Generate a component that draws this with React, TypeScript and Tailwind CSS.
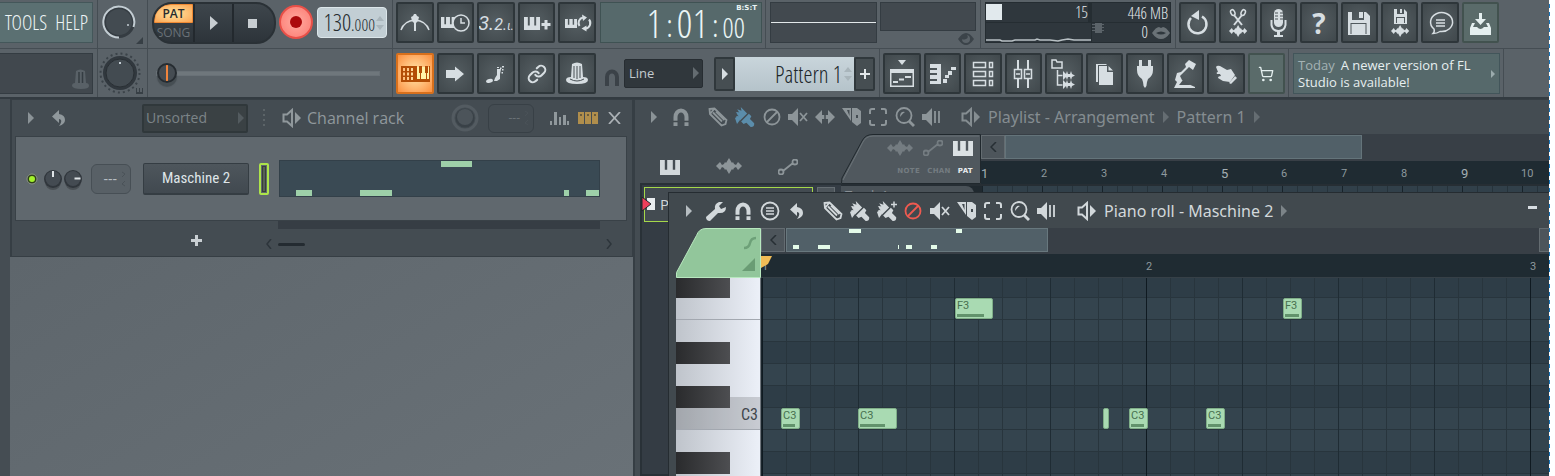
import type { ReactNode } from 'react';
import { Link, ShoppingCart } from 'lucide-react';

const NARROW = "font-light font-['Open_Sans_Condensed_Light','Noto_Sans_Condensed_Light','Open_Sans_Condensed','Roboto_Condensed',sans-serif]";

function Svg({ w = 32, h = 32, children, className = '' }: { w?: number; h?: number; children: ReactNode; className?: string }) {
  return (
    <svg width={w} height={h} viewBox={`0 0 ${w} ${h}`} fill="currentColor" className={`shrink-0 ${className}`} aria-hidden="true">
      {children}
    </svg>
  );
}

const Wave = ({ t }: { t?: string }) => (
  <path
    transform={t}
    d="M0 8l4-4 2 3 2-1 1-2 1 1 3-5 3 5 1-1 1 2 2 1 2-3 4 4-4 4-2-3-2 1-1 2-1-1-3 5-3-5-1 1-1-2-2-1-2 3z"
  />
);

const Keys = ({ x, y, w, h }: { x: number; y: number; w: number; h: number }) => (
  <path
    d={`M${x} ${y}h${w * 0.24}v${h * 0.65}h${w * 0.12}V${y}h${w * 0.28}v${h * 0.65}h${w * 0.12}V${y}h${w * 0.24}v${h}h${-w}z`}
  />
);

const topIcons: { label: string; icon: ReactNode }[] = [
  {
    label: 'Metronome',
    icon: (
      <Svg>
        <path d="M2 23q3-9 14-10q11 1 14 10" fill="none" stroke="currentColor" strokeWidth="1.500" />
        <path d="M15 7h2l1 2 2 1-1 4-2 2v8h-2v-8l-2-2-1-4 2-1z" />
      </Svg>
    ),
  },
  {
    label: 'Wait for input',
    icon: (
      <Svg>
        <Keys x={2} y={10} w={14} h={11} />
        <circle cx="22" cy="16" r="8" fill="#4b5357" stroke="currentColor" strokeWidth="1.500" />
        <path d="M22 11v5h4" fill="none" stroke="currentColor" strokeWidth="1.500" />
      </Svg>
    ),
  },
  {
    label: 'Countdown',
    icon: (
      <span className="flex items-baseline font-['Roboto',sans-serif] italic">
        <span className="text-xl">3.</span>
        <span className="text-base">2.</span>
        <span className="text-xs">ι.</span>
      </span>
    ),
  },
  {
    label: 'Overdub',
    icon: (
      <Svg>
        <Keys x={3} y={10} w={16} h={13} />
        <path d="M23.500 13h3v3h3v3h-3v3.500h-3V19h-3v-3h3z" />
      </Svg>
    ),
  },
  {
    label: 'Loop record',
    icon: (
      <Svg>
        <Keys x={4} y={12} w={12} h={9} />
        <path d="M18.500 19a5.500 5.500 0 0 1 3.500-8.500M28 12.500a5.500 5.500 0 0 1-3.500 9" fill="none" stroke="currentColor" strokeWidth="2" />
        <path d="M21 7.500l5 3-4 3.500zM25.500 18.500l-5 3 5 3z" />
      </Svg>
    ),
  },
];

const panelIcons: { label: string; icon: ReactNode }[] = [
  {
    label: 'Typing keyboard',
    icon: (
      <Svg>
        <path d="M17 9h13v14H17z" fill="#fff3a8" />
        <path fillRule="evenodd" d="M2 8h14v16H2zM4 10v3h2v-3zM8 10v3h2v-3zM12 10v3h2v-3zM4 14.500v3h2v-3zM8 14.500v3h2v-3zM12 14.500v3h2v-3zM4 19v3h2v-3zM8 19v3h2v-3zM12 19v3h2v-3z" />
        <path d="M16 8h2v16h-2zM20 8h3v7h-1v6h-1v-6h-1zM26 8h3v7h-1v6h-1v-6h-1zM30 8h1v13h-1zM16 21h15v3H16z" />
      </Svg>
    ),
  },
  { label: 'Auto scroll', icon: <Svg><path d="M7 12h9V8.500l9 7.500-9 7.500V20H7z" /></Svg> },
  {
    label: 'Step edit',
    icon: (
      <Svg>
        <path d="M17 11h4l-1 5v5l-3 2h-3l1-3 2-3z" />
        <ellipse cx="9.500" cy="23" rx="3.500" ry="2" transform="rotate(-15 9 23)" />
        <path d="M17 9h2v1h-2zM20 9.500h1.500V11H20zM22 8h2v1.500h-2zM22 11h1.500v1.500H22zM21.500 14H23v1.500h-1.500z" />
      </Svg>
    ),
  },
  { label: 'Link controller', icon: <Link className="size-5" strokeWidth={2.5} /> },
  {
    label: 'Multilink',
    icon: (
      <Svg>
        <path d="M5 22q0-3 5-3l1-13q5-3 10 0l1 13q5 0 5 3 0 4-11 4T5 22z" />
        <path d="M13 8v12M16 8v13M19 8v12M9 21q7 4 14 0" fill="none" stroke="#495155" />
      </Svg>
    ),
  },
];

const fileIcons: { label: string; icon: ReactNode; lit?: boolean }[] = [
  {
    label: 'Undo',
    icon: (
      <Svg>
        <path d="M9 11a9 9 0 1 0 11-1.500" fill="none" stroke="currentColor" strokeWidth="2.500" />
        <path d="M17 3v10l-8-4z" />
      </Svg>
    ),
  },
  {
    label: 'Edit audio',
    icon: (
      <Svg>
        <path d="M12 8l8 10M20 8l-8 10" stroke="currentColor" strokeWidth="2" />
        <g fill="none" stroke="currentColor" strokeWidth="1.500">
          <ellipse cx="11" cy="5.500" rx="2" ry="3" transform="rotate(-25 11 6)" />
          <ellipse cx="21" cy="5.500" rx="2" ry="3" transform="rotate(25 21 6)" />
        </g>
        <Wave t="translate(7 18) scale(.7 .75)" />
      </Svg>
    ),
  },
  {
    label: 'Record audio',
    icon: (
      <Svg>
        <rect x="12" y="2" width="9" height="18" rx="4.500" />
        <path d="M13 6h3M18 6h3M13 9h3M18 9h3M13 12h3M18 12h3" stroke="#4b5357" />
        <path d="M9.500 13v5q1 6 7 6t7-6v-5" fill="none" stroke="currentColor" strokeWidth="2" />
        <path d="M15 24h3v4h3v2h-9v-2h3z" />
      </Svg>
    ),
  },
  {
    label: 'Help',
    icon: <span className="font-['Open_Sans',sans-serif] text-[28px] font-bold">?</span>,
  },
  {
    label: 'Save',
    icon: (
      <Svg>
        <path fillRule="evenodd" d="M5 5h4v8h12V5h2l4 4v19H5zM7.500 16v11h16V16z" />
        <path d="M8.500 17h14v10h-14zM16 5h4v6h-4z" />
      </Svg>
    ),
  },
  {
    label: 'Render',
    icon: (
      <Svg>
        <path fillRule="evenodd" d="M10 2h3v5h7V2l3 3v12H10zM12 10v6h9v-6z" />
        <path d="M13 11h7v5h-7zM16 2h2v4h-2z" />
        <Wave t="translate(7 18) scale(.7 .75)" />
      </Svg>
    ),
  },
  {
    label: 'Project info',
    icon: (
      <Svg>
        <path d="M10 22a11 9.500 0 1 1 6 2.500q-3 2-7 2 2-2 1-4.500z" fill="none" stroke="currentColor" strokeWidth="1.500" />
        <path d="M12 13h9M12 16h9M12 19h9" stroke="currentColor" strokeWidth="1.500" />
      </Svg>
    ),
  },
  {
    label: 'Install update',
    lit: true,
    icon: (
      <Svg>
        <path d="M15 6h3v6h4l-5.500 6L11 12h4z" />
        <path d="M8 16h3l-2 4h4q3.500 4 7 0h4l-2-4h3l2 5v7H6v-7z" />
      </Svg>
    ),
  },
];

const windowIcons: { label: string; icon: ReactNode; lit?: boolean }[] = [
  {
    label: 'Playlist',
    icon: (
      <Svg>
        <path d="M12 2h8l-4 5z" />
        <path fillRule="evenodd" d="M4 11h24v18H4zM5.500 15v12.500h21V15z" />
        <path d="M7 23h5v2H7zM13 20.500h5v2h-5zM19 18h6v2h-6z" />
      </Svg>
    ),
  },
  {
    label: 'Piano roll',
    icon: (
      <Svg>
        <path d="M4 6h11v20H4v-3h7v-2H4v-4h7v-2H4v-3h7v-2H4z" />
        <path d="M17 21h4v4h-4zM19 17h4v3h-4zM22 13h4v4h-4zM25 9h5v3h-5z" />
      </Svg>
    ),
  },
  {
    label: 'Channel rack',
    icon: (
      <Svg>
        <g fill="none" stroke="currentColor" strokeWidth="1.500">
          <path d="M6.500 4.500h12v5h-12zM22.500 4.500h3v5h-3zM6.500 13.500h12v5h-12zM22.500 13.500h3v5h-3zM6.500 22.500h12v5h-12zM22.500 22.500h3v5h-3z" />
        </g>
      </Svg>
    ),
  },
  {
    label: 'Mixer',
    icon: (
      <Svg>
        <path d="M11 2v9M11 21v9M21 2v9M21 21v9" stroke="currentColor" strokeWidth="2" />
        <path d="M7.500 11.500h7v9h-7zM17.500 11.500h7v9h-7zM9 16h4M19 16h4" fill="none" stroke="currentColor" strokeWidth="1.500" />
      </Svg>
    ),
  },
  {
    label: 'Browser',
    icon: (
      <Svg>
        <path d="M4 2h4l1 2h5v6H4zM9.500 12v15h5M9.500 17.500h5" fill="none" stroke="currentColor" strokeWidth="1.500" />
        <path d="M15 13l3 3 1-3 1 3h2l1-3 1 3 3 1.500-3 1.500-1 3-1-3h-2l-1 3-1-3-3 3zM15 22l3 3 1-3 1 3h2l1-3 1 3 3 1.500-3 1.500-1 3-1-3h-2l-1 3-1-3-3 3z" />
      </Svg>
    ),
  },
  {
    label: 'Copy',
    icon: (
      <Svg>
        <path d="M8 6h10l1 1H10v17H8z" />
        <path d="M11 8h8v6h6v13H11zM20.500 8l4.500 4.500h-4.500z" />
      </Svg>
    ),
  },
  {
    label: 'Plugins',
    icon: <Svg><path d="M10 2h3v6h-3zM19 2h3v6h-3zM8 8h16v4q0 6-5 9l-1 3q0 4-2 6-2-2-2-6l-1-3q-5-3-5-9z" /></Svg>,
  },
  {
    label: 'Touch controllers',
    icon: (
      <Svg>
        <path d="M16 6l4-4 7 4-3 6-4-3-7 7-2 2 2 4 4 3 9 4v1H5l3-6-2-2 2-7 4-1 5-5z" />
        <path d="M14 22l-4 5h12z" fill="#4b5357" />
      </Svg>
    ),
  },
  {
    label: 'Pointer',
    icon: (
      <Svg>
        <path d="M6 9q1-2 4-1l7 4 4-1 4 6-5 7-7-1-5-3q0-2 3-2l-1-2-3 0q-1-2 1-2z" />
        <path d="M25 18l2 2-6 6-2-1z" />
      </Svg>
    ),
  },
  { label: 'Shop', lit: true, icon: <ShoppingCart className="size-4" strokeWidth={2} /> },
];

function ToolButton({ label, icon, lit, on }: { label: string; icon: ReactNode; lit?: boolean; on?: boolean }) {
  const look = on
    ? 'border-[#d8701c] bg-radial from-[#ffe9ae] to-[#fb8f3c] text-[#b34d06]'
    : lit
      ? 'border-[#42524f] bg-[#5a6b6a] text-[#e4efef]'
      : 'border-[#2e363a] bg-radial from-[#555e62] to-[#40484c] text-[#d7dee2]';
  return (
    <button aria-label={label} className={`flex h-[41px] min-w-0 flex-1 items-center justify-center overflow-hidden rounded-xs border-2 ${look}`}>
      {icon}
    </button>
  );
}

const Tri = ({ className = 'text-[#9aa1a5]' }: { className?: string }) => (
  <Svg w={6} h={12} className={className}><path d="M0 0l6 6-6 6z" /></Svg>
);

const SpeakerLogo = () => (
  <Svg w={19} h={20}>
    <path d="M1.500 6.500H5L10 2v16l-5-4.500H1.500z" fill="none" stroke="currentColor" strokeWidth="2" />
    <path d="M13 4l6 6-6 6z" />
  </Svg>
);

const Magnet = () => (
  <Svg w={18} h={20}>
    <path d="M3.500 19v-9a5.500 6.500 0 0 1 11 0v9" fill="none" stroke="currentColor" strokeWidth="4" />
    <path d="M1 14.500h5M12 14.500h5" stroke="#41494e" strokeWidth="1.500" />
  </Svg>
);

const Undo = () => (
  <Svg w={14} h={16}><path d="M7 0v4q6 1 6 6 0 4-6 6 3-4 2-6-1-1-2-1v4L0 6.500z" /></Svg>
);

const Keyboard = () => <Svg w={20} h={15}><Keys x={0} y={0} w={20} h={15} /></Svg>;
const WaveIcon = () => <Svg w={26} h={18}><Wave t="translate(0 1)" /></Svg>;
const Automation = () => (
  <Svg w={20} h={16}>
    <path d="M5 12L15 4M5.500 13a2.500 2.500 0 1 1-5 0 2.500 2.500 0 0 1 5 0zM19.500 3a2.500 2.500 0 1 1-5 0 2.500 2.500 0 0 1 5 0z" fill="none" stroke="currentColor" strokeWidth="1.800" />
  </Svg>
);

const Brush = ({ plus }: { plus?: boolean }) => (
  <Svg w={20} h={20}>
    <path transform="rotate(-45 10 10)" d="M4 9V3l2 2 1-5 2 3 1-4 2 4 2-3v9zM4 10.500h11V14l-3 1v6q-2.500 3-5 0v-6l-3-1z" />
    <path d="M0 11l3-2 2 4-3 4zM2 5l3 1-2 3z" />
    {plus && <path d="M14 3.500h6M17 .5v6" stroke="currentColor" strokeWidth="1.500" />}
  </Svg>
);

const drawTools = {
  pencil: (
    <Svg w={20} h={20}>
      <path d="M1.500 2l5-.5 12 11.500-1 4-4 1.500L2 7zM2 7l4.500-5.500M5 5.500l9 9M8 4.500l8.500 8.500" fill="none" stroke="currentColor" strokeWidth="1.800" />
    </Svg>
  ),
  brush: <Brush />,
  brushPlus: <Brush plus />,
  remove: (
    <Svg w={20} h={20}>
      <circle cx="10" cy="10" r="7.500" fill="none" stroke="currentColor" strokeWidth="1.800" />
      <path d="M5 15L15 5" stroke="currentColor" strokeWidth="1.800" />
    </Svg>
  ),
  mute: (
    <Svg w={20} h={20}>
      <path d="M0 7h4l6-6v18l-6-6H0z" />
      <path d="M12 6l7 8M19 6l-7 8" stroke="currentColor" strokeWidth="1.800" />
    </Svg>
  ),
  slip: <Svg w={20} h={20}><path d="M0 10l7-7v5h6V3l7 7-7 7v-5H7v5z" /><path d="M10 5v10" stroke="#444c52" strokeWidth="1.500" /></Svg>,
  slice: (
    <Svg w={20} h={20}>
      <path fillRule="evenodd" d="M10 1h5l4 3v12l-4 3-5-4zM14 8v3h2V8z" />
      <path fillRule="evenodd" d="M0 1h9v13zM5 3l2.500 6V3z" />
    </Svg>
  ),
  select: (
    <Svg w={20} h={20}>
      <path d="M2 7V4q0-2 2-2h3M13 2h3q2 0 2 2v3M18 13v3q0 2-2 2h-3M7 18H4q-2 0-2-2v-3" fill="none" stroke="currentColor" strokeWidth="2" />
    </Svg>
  ),
  zoom: (
    <Svg w={20} h={20}>
      <circle cx="9" cy="8.500" r="7.500" fill="none" stroke="currentColor" strokeWidth="1.800" />
      <path d="M5 10q0-6 5-5-2 1-5 5zM13 15l2-2 5 5-2 2z" />
    </Svg>
  ),
  playback: (
    <Svg w={20} h={20}>
      <path d="M0 7h4l6-6v18l-6-6H0z" />
      <path d="M13 4v12M17 4v12" stroke="currentColor" strokeWidth="1.800" />
    </Svg>
  ),
};

const playlistTools: [string, ReactNode, string?][] = [
  ['Draw', drawTools.pencil],
  ['Paint', drawTools.brush, 'text-[#5b8dab]'],
  ['Delete', drawTools.remove],
  ['Mute', drawTools.mute],
  ['Slip', drawTools.slip],
  ['Slice', drawTools.slice],
  ['Select', drawTools.select],
  ['Zoom', drawTools.zoom],
  ['Playback', drawTools.playback],
];

const pianoTools: [string, ReactNode, string?][] = [
  ['Draw', drawTools.pencil],
  ['Paint', drawTools.brush],
  ['Paint sequence', drawTools.brushPlus],
  ['Delete', drawTools.remove, 'text-[#ee5a50]'],
  ['Mute', drawTools.mute],
  ['Slice', drawTools.slice],
  ['Select', drawTools.select],
  ['Zoom', drawTools.zoom],
  ['Playback', drawTools.playback],
];

function Tools({ items }: { items: [string, ReactNode, string?][] }) {
  return (
    <div className="grid w-60 shrink-0 grid-cols-9">
      {items.map(([label, icon, color]) => (
        <button key={label} aria-label={label} className={`flex justify-center ${color ?? ''}`}>
          {icon}
        </button>
      ))}
    </div>
  );
}

function SmallKnob({ angle }: { angle: number }) {
  return (
    <Svg w={20} h={24}>
      <circle cx="10" cy="13" r="8" fill="#4a5055" />
      <circle cx="10" cy="10" r="9" fill="#30363c" />
      <circle cx="10" cy="9.500" r="7.500" fill="#444b52" />
      <path d="M10 2v6" stroke="#dfe4e7" strokeWidth="2" transform={`rotate(${angle} 10 9.500)`} />
    </Svg>
  );
}

function SpinArrows() {
  return (
    <Svg w={8} h={16} className="text-[#a9b5bb]"><path d="M0 6l4-5 4 5zM0 10h8l-4 5z" /></Svg>
  );
}

function Toolbar() {
  return (
    <header className="border-b-2 border-[#333b41] bg-[#5a6268]">
      <div className="flex h-[49px] border-b border-[#454d53]">
        <div className="w-[98px] shrink-0 border-r border-[#454d53] pt-0.5">
          <nav className={`flex h-[41px] w-[93px] items-center justify-end gap-2 overflow-hidden border border-l-0 border-[#44575a] bg-[#5b7072] pr-1 text-xl text-[#eef5f6] ${NARROW}`}>
            <a href="#options">S</a>
            <a href="#tools">TOOLS</a>
            <a href="#help">HELP</a>
          </nav>
        </div>
        <div className="relative flex w-[50px] shrink-0 justify-center border-r border-[#454d53] pt-[5px] pr-[5px]">
          <Svg w={36} h={36}>
            <circle cx="17" cy="17" r="16" fill="#353c42" />
            <circle cx="17" cy="17" r="13" fill="#434b51" />
            <path d="M17 32.500A15.500 15.500 0 1 1 31.500 22" fill="none" stroke="#c3cdd3" strokeWidth="2" />
            <circle cx="26" cy="20" r="1" fill="#c3cdd3" />
          </Svg>
          <Svg w={7} h={7} className="absolute right-1 bottom-1 text-[#373f45]"><path d="M7 0v7H0z" /></Svg>
        </div>
        <div className="flex w-[245px] shrink-0 border-r border-[#454d53] pt-0.5 pl-1">
          <div className="flex h-[42px] w-[124px] overflow-hidden rounded-[20px] border-2 border-[#2a3136] bg-linear-to-b from-[#3e464c] to-[#2d343a]">
            <div className="flex w-[41px] flex-col border-r-2 border-[#23292e] text-center font-['Open_Sans',sans-serif] text-xs">
              <button className="h-[19px] rounded-tl-2xl border border-[#f08a34] bg-radial from-[#ffe6a0] to-[#fba552] leading-4 font-semibold text-[#272b2e]">PAT</button>
              <button className="h-[19px] leading-5 text-[#697177]">SONG</button>
            </div>
            <button aria-label="Play" className="flex w-[39px] items-center justify-center border-r-2 border-[#23292e] text-[#c8ced2]">
              <Svg w={8} h={14}><path d="M0 0l8 7-8 7z" /></Svg>
            </button>
            <button aria-label="Stop" className="flex flex-1 items-center justify-center pr-1"><span className="size-[9px] bg-[#c8ced2]" /></button>
          </div>
          <button aria-label="Record" className="mt-[3px] ml-[3px] flex size-[34px] items-center justify-center rounded-full border-2 border-[#e85048] bg-radial from-[#ffaaa0] to-[#fb7a72]">
            <span className="size-3 rounded-full bg-[#ab0a0c]" />
          </button>
          <div className={`mt-[5px] ml-1 flex h-[31px] w-[70px] items-center justify-end gap-px rounded border border-[#dce6ea] bg-[#c2ced4] pr-0.5 text-[#262c30] ${NARROW}`}>
            <span className="text-[23px] leading-none">130<span className="text-[17px]">.000</span></span>
            <SpinArrows />
          </div>
        </div>
        <div className="flex w-[373px] shrink-0 gap-1 border-r border-[#454d53] pt-0.5 pl-[3px]">
          <div className="flex w-50 gap-[3px]">
            {topIcons.map((b) => <ToolButton key={b.label} {...b} />)}
          </div>
          <div className={`relative mr-[3px] flex h-[41px] flex-1 items-center justify-end gap-1 border border-[#3f5253] bg-[#56696b] pr-4 text-[#eaf5f5] ${NARROW}`}>
            <span className="text-[39px] leading-none">1</span>
            <span className="pt-1 text-[32px] leading-none">:</span>
            <span className="text-[39px] leading-none">01</span>
            <span className="pt-1 text-[32px] leading-none">:</span>
            <span className="pt-2 text-[28px] leading-none">00</span>
            <span className="absolute top-0 right-1 font-['DejaVu_Sans',sans-serif] text-[7px] font-bold">B:S:T</span>
          </div>
        </div>
        <div className="flex w-[215px] shrink-0 gap-[3px] border-r border-[#454d53] pt-0.5 pl-1">
          <div className="flex h-[41px] w-[107px] items-center border border-[#343c42] bg-[#42494f]"><div className="h-px w-full bg-[#e3e8ea]" /></div>
          <div className="flex w-24 flex-col items-end">
            <div className="h-[29px] w-full border border-[#343c42] bg-[#42494f]" />
            <Svg w={16} h={14} className="mt-px mr-0.5 text-[#3b4349]">
              <path fillRule="evenodd" d="M0 7q8-12 16 0-8 12-16 0zM4 7a4 4 0 0 0 8 0 4 4 0 0 0-3-4q2 3-1 4t-4 0z" />
            </Svg>
          </div>
        </div>
        <div className="w-[195px] shrink-0 border-r border-[#454d53] pt-0.5 pl-1">
          <div className={`grid h-[41px] w-[186px] grid-cols-[106px_1fr] grid-rows-2 border border-[#252d32] bg-[#2f373d] text-base leading-5 text-[#e6ebee] ${NARROW}`}>
            <div className="flex items-center justify-between border-r-4 border-b border-[#252d32]"><span className="size-4 bg-[#e1e9ed]" />15</div>
            <div className="border-b border-[#252d32] pr-0.5 text-right">446 MB</div>
            <div className="flex items-end border-r border-[#252d32]">
              <Svg w={105} h={4}><path d="M0 2h14l2 1h10l3-1h20l2-1 3 1h10l8 1 4-1 6-1 6 1h17" fill="none" stroke="#b8c0c4" strokeWidth="1.500" /></Svg>
            </div>
            <div className="flex items-center justify-end gap-1">
              <Svg w={12} h={12} className="mr-auto mb-2 text-[#5b6369]"><path d="M3 1h7v10H3zM0 2h12v1H0zM0 5h12v1H0zM0 8h12v1H0z" /></Svg>
              0
              <Svg w={18} h={13} className="text-[#6a7277]"><path fillRule="evenodd" d="M0 7q4-6 7-6l2 1 2-1q3 0 7 6-4 6-9 6T0 7zM4 7q5 3 10 0-5-3-10 0z" /></Svg>
            </div>
          </div>
        </div>
        <div className="flex w-[323px] shrink-0 gap-[3px] pt-0.5 pl-[3px]">
          {fileIcons.map((b) => <ToolButton key={b.label} {...b} />)}
        </div>
      </div>

      <div className="flex h-12">
        <div className="w-[98px] shrink-0 border-r border-[#454d53] pt-1">
          <div className="flex h-[41px] w-[93px] items-end justify-end border border-l-0 border-[#343c42] bg-[#41484e] pr-[3px] pb-1">
            <Svg w={17} h={20} className="text-[#596167]">
              <path d="M0 17q0-3 3-3L4 2q4-3 9 0l1 12q3 0 3 3 0 3-8 3t-9-3z" />
              <path d="M7 3v11M10.500 3v11" stroke="#343c42" strokeWidth="1.500" />
            </Svg>
          </div>
        </div>
        <div className="relative flex w-[50px] shrink-0 justify-center border-r border-[#454d53] pt-[3px] pr-[5px]">
          <Svg w={42} h={42}>
            <circle cx="21" cy="21" r="19.500" fill="none" stroke="#3b4349" strokeWidth="2" strokeDasharray="2 3.100" />
            <circle cx="21" cy="21" r="17" fill="#31383e" />
            <circle cx="21" cy="21" r="14" fill="#434b51" stroke="#292f34" />
            <path d="M20 10h2v2h-2z" fill="#c3cdd3" />
          </Svg>
          <Svg w={7} h={6} className="absolute right-1 bottom-[3px] text-[#373f45]"><path d="M0 0h1v4h2V0h1v4h2V0h1v6H0z" /></Svg>
        </div>
        <div className="flex w-[245px] shrink-0 items-center border-r border-[#454d53] pl-2">
          <input
            type="range"
            aria-label="Master pitch"
            min={0}
            max={100}
            defaultValue={0}
            className="h-[5px] w-[224px] appearance-none border border-[#697177] bg-[#6f777c] [&::-webkit-slider-thumb]:size-5 [&::-webkit-slider-thumb]:appearance-none [&::-webkit-slider-thumb]:rounded-full [&::-webkit-slider-thumb]:border-2 [&::-webkit-slider-thumb]:border-[#262c31] [&::-webkit-slider-thumb]:bg-[linear-gradient(90deg,#454c52_7px,#f0843c_7px,#f0843c_9px,#454c52_9px)] [&::-webkit-slider-thumb]:shadow-[0_4px_1px_#464e53]"
          />
        </div>
        <div className="flex w-[487px] shrink-0 border-r border-[#454d53] pt-1 pl-[3px]">
          <div className="flex w-50 gap-[3px]">
            {panelIcons.map((b, i) => <ToolButton key={b.label} {...b} on={i === 0} />)}
          </div>
          <button aria-label="Snap" className="ml-2 flex w-4 items-center pt-1 text-[#3b4248]">
            <Svg w={16} h={17}><path d="M3 17V8a5 5.500 0 0 1 10 0v9" fill="none" stroke="currentColor" strokeWidth="4" /></Svg>
          </button>
          <div className="relative mt-1.5 ml-1 h-[29px] w-[79px]">
            <select aria-label="Snap to" className="size-full appearance-none rounded-xs border border-[#272d32] bg-[#30373c] pl-1 font-['Open_Sans',sans-serif] text-[13px] text-[#c3cace]">
              <option>Line</option>
            </select>
            <span className="pointer-events-none absolute top-2 right-1"><Tri className="text-[#646c71]" /></span>
          </div>
          <div className={`mt-1 mr-1 ml-[11px] flex h-[34px] flex-1 text-[#20262a] ${NARROW}`}>
            <button aria-label="Pattern menu" className="flex w-[21px] items-center justify-center rounded-xs border-2 border-[#30383c] bg-[#464e52]"><Tri className="text-[#d7dee2]" /></button>
            <button className="flex flex-1 items-center justify-end gap-0.5 bg-linear-to-b from-[#c9d5db] to-[#b5c3ca] pr-0.5 text-[23px]">
              Pattern 1
              <SpinArrows />
            </button>
            <button aria-label="Add pattern" className="flex w-[21px] items-center justify-center rounded-xs border-2 border-[#30383c] bg-[#464e52] text-[#e3e8ea]">
              <Svg w={10} h={10}><path d="M4 0h2v4h4v2H6v4H4V6H0V4h4z" /></Svg>
            </button>
          </div>
        </div>
        <div className="flex w-[409px] shrink-0 gap-[3px] border-r border-[#454d53] px-[3px] pt-1">
          {windowIcons.map((b) => <ToolButton key={b.label} {...b} />)}
        </div>
        <div className="w-[215px] shrink-0 border-r border-[#454d53] pt-1 pl-1">
          <div className="flex h-[41px] w-[207px] items-center justify-between border border-[#42555a] bg-[#56696b] px-1 font-['Open_Sans',sans-serif] text-[13px] leading-[17px] text-[#e7eff0]">
            <p className="w-[190px]"><span className="mr-1.5 text-[#a4b2b4]">Today</span>A newer version of FL Studio is available!</p>
            <Svg w={4} h={8} className="text-[#9babad]"><path d="M0 0l4 4-4 4z" /></Svg>
          </div>
        </div>
      </div>
    </header>
  );
}

const stepNotes = [
  [16, 16, false],
  [80, 32, false],
  [161, 31, true],
  [284, 5, false],
  [306, 13, false],
] as const;

function ChannelRack() {
  return (
    <section className="h-[158px] border border-l-2 border-[#363e44] bg-[#444c52]">
      <div className="flex h-9 items-center text-[#90989c]">
        <div className="flex w-[130px] items-center gap-[18px] pl-4"><Tri className="text-[#8b9397]" /><Undo /></div>
        <div className="relative h-[29px] w-[106px]">
          <select aria-label="Channel filter" className="size-full appearance-none rounded-xs border-2 border-[#30383b] bg-[#3a4144] pl-0.5 font-['Open_Sans',sans-serif] text-sm text-[#7c8488]">
            <option>Unsorted</option>
          </select>
          <span className="pointer-events-none absolute top-2 right-1"><Tri className="text-[#535b5f]" /></span>
        </div>
        <Svg w={8} h={20} className="ml-3 text-[#5c6468]"><path d="M3 1h2v2H3zM3 6h2v2H3zM3 11h2v2H3zM3 16h2v2H3z" /></Svg>
        <h2 className="ml-[14px] flex items-center gap-1.5 font-['Open_Sans',sans-serif] text-base"><SpeakerLogo />Channel rack</h2>
        <div className="mr-[11px] ml-auto flex items-center">
          <Svg w={30} h={28}>
            <circle cx="15" cy="14" r="12" fill="none" stroke="#535b61" strokeWidth="3" />
            <circle cx="15" cy="14" r="9.500" fill="#394147" />
            <circle cx="15" cy="13" r="8" fill="#4c545a" />
          </Svg>
          <div className="ml-2 flex h-[29px] w-[46px] items-center justify-end gap-1 rounded-md border border-[#384046] pr-1 text-xs text-[#697176]">---<SpinHooks /></div>
          <Svg w={19} h={14} className="ml-4"><path d="M0 10h2v4H0zM4 1h3v13H4zM9 6h2v8H9zM13 4h3v10h-3zM17 10h2v4h-2z" /></Svg>
          <Svg w={20} h={12} className="ml-[9px] text-[#b08e4c]">
            <path d="M0 0h6v12H0zM7 0h6v12H7zM14 0h6v12h-6z" />
            <path d="M2 2h2v2H2zM9 2h2v2H9zM16 2h2v2h-2z" fill="#6a5b3c" />
          </Svg>
          <button aria-label="Close" className="ml-[10px] text-[#abb1b5]"><Svg w={13} h={12}><path d="M1 0l11 12M12 0L1 12" stroke="currentColor" strokeWidth="1.800" /></Svg></button>
        </div>
      </div>
      <div className="mr-[5px] ml-[3px] flex h-[85px] items-center border border-[#394147] bg-[#60686e] pr-[26px] pl-2.5">
        <Svg w={12} h={12}><circle cx="6" cy="6" r="5" fill="#2f4018" stroke="#8b9589" /><circle cx="6" cy="6" r="3" fill="#a2f22c" /></Svg>
        <div className="ml-[5px] flex pt-1"><SmallKnob angle={0} /><SmallKnob angle={90} /></div>
        <div className="ml-2 flex h-[30px] w-10 items-center justify-end gap-1 rounded-md border border-[#474f55] bg-[#586066] pr-1 text-sm text-[#b6bdc1]">---<SpinHooks /></div>
        <button className="ml-3 h-8 w-[106px] rounded-xs border border-b-2 border-[#353d43] bg-linear-to-b from-[#4e565c] to-[#414950] font-['Roboto_Condensed','Roboto',sans-serif] text-[15px] text-[#dfe5e8]">Maschine 2</button>
        <span className="ml-[10px] h-8 w-2.5 rounded-xs border-2 border-[#ade44a] p-px"><span className="block size-full border border-[#384038] bg-[#566055]" /></span>
        <div className="relative ml-2.5 h-[37px] flex-1 overflow-hidden border border-[#334049] bg-[#3a4a54]">
          {stepNotes.map(([x, w, top]) => (
            <span key={x} className={`absolute h-1.5 bg-[#9ed0a9] ${top ? 'top-0' : 'bottom-0'}`} style={{ left: x, width: w }} />
          ))}
        </div>
      </div>
      <div className="mr-8 ml-[266px] h-2 bg-[#363d44]" />
      <div className="flex items-start pt-1.5 text-[#2d353b]">
        <button aria-label="Add channel" className="ml-[179px] text-[#c9cfd3]"><Svg w={11} h={11}><path d="M4 0h3v4h4v3H7v4H4V7H0V4h4z" /></Svg></button>
        <div className="ml-[64px] flex flex-1 items-center pt-1 pr-5">
          <Svg w={6} h={10}><path d="M5 0L1 5l4 5" fill="none" stroke="currentColor" strokeWidth="1.500" /></Svg>
          <span className="ml-1.5 h-[3px] w-[27px] rounded-full bg-[#242b31]" />
          <Svg w={6} h={10} className="ml-auto"><path d="M1 0l4 5-4 5" fill="none" stroke="currentColor" strokeWidth="1.500" /></Svg>
        </div>
      </div>
    </section>
  );
}

function SpinHooks() {
  return <Svg w={5} h={16} className="text-[#4a5258]"><path d="M1 1l3 2-3 3M4 10L1 13l3 2" fill="none" stroke="currentColor" /></Svg>;
}

const ScrollLeft = () => (
  <button aria-label="Scroll left" className="flex h-6 w-6 shrink-0 items-center justify-center border border-[#646c71] bg-[#4d555b] text-[#272f34]">
    <Svg w={7} h={10}><path d="M6 0L1 5l5 5" fill="none" stroke="currentColor" strokeWidth="1.500" /></Svg>
  </button>
);

function Playlist({ children }: { children: ReactNode }) {
  return (
    <section className="relative flex min-w-0 flex-1 flex-col overflow-hidden border-t border-l-2 border-[#363e44] bg-[#444c52]">
      <div className="flex h-[34px] items-center pl-[5px] text-[#8d9599]">
        <div className="flex w-[27px] justify-center"><Tri className="text-[#8b9397]" /></div>
        <button aria-label="Snap" className="flex w-[27px] justify-center"><Magnet /></button>
        <div className="ml-[11px]"><Tools items={playlistTools} /></div>
        <h2 className="ml-4 flex items-center gap-2 font-['Noto_Sans',sans-serif] text-base whitespace-nowrap text-[#858d91]">
          <SpeakerLogo />Playlist - Arrangement
          <Tri className="text-[#656d72]" />Pattern 1
          <Tri className="text-[#656d72]" />
        </h2>
      </div>
      <div className="flex flex-1">
        <div className="flex w-[206px] shrink-0 flex-col pl-[5px]">
          <div className="flex h-[49px] items-end gap-9 pb-2 pl-5 text-[#8d9599]">
            <span className="text-[#d2d8db]"><Keyboard /></span>
            <WaveIcon />
            <Automation />
          </div>
          <div className="flex flex-1 gap-1 border-2 border-r-0 border-[#293137] bg-[#343c44] pt-0.5 pl-0.5">
            <div className="relative h-[35px] w-[169px] border border-[#a5d84a] bg-[#434b51] pt-2 pl-[15px] font-['Open_Sans',sans-serif] text-[15px] leading-4 text-[#d0d6da]">
              Pattern 1
              <Svg w={16} h={16} className="absolute top-2 -left-1"><path d="M6 2h8v12H6z" fill="#e8ecee" /><path d="M1 1l9 7-9 7z" fill="#ef3f5b" stroke="#20262a" /></Svg>
            </div>
            <div className="h-5 w-[18px] border border-[#656d72] bg-[#4d555b]" />
          </div>
        </div>
        <div className="flex min-w-0 flex-1 flex-col">
          <div className="flex h-[50px]">
            <div className="relative w-[140px] shrink-0">
              <Svg w={140} h={50} className="absolute inset-0"><path d="M.5 49.500L1 44 21 7Q24 .5 32 .5h107.500v49z" fill="#50585e" stroke="#20282d" /><path d="M2 46L22 8q3-6 10-6h106" fill="none" stroke="#6b7378" /></Svg>
              <div className="relative flex flex-col items-end gap-2 pt-[5px] pr-2 text-[#747c81]">
                <div className="flex items-center gap-2.5"><WaveIcon /><Automation /><span className="text-[#dbe1e4]"><Keyboard /></span></div>
                <div className="flex gap-[7px] font-['DejaVu_Sans',sans-serif] text-[7px] leading-3 font-bold tracking-wider">
                  <span>NOTE</span><span>CHAN</span><span className="text-[#e8ecee]">PAT</span>
                </div>
              </div>
            </div>
            <div className="min-w-0 flex-1">
              <div className="flex h-[27px] bg-[#383f46] pt-px">
                <ScrollLeft />
                <div className="h-6 w-[357px] border border-[#64747a] bg-[#516068]" />
              </div>
              <ol className="flex h-[23px] overflow-hidden bg-[#1f2b32] font-['Roboto',sans-serif] text-[11px] leading-[26px] text-[#8e999e]">
                {[1, 2, 3, 4, 5, 6, 7, 8, 9, 10].map((n) => (
                  <li key={n} className={`w-[60px] shrink-0 ${n % 4 === 1 ? 'text-[13px] text-[#a4afb4]' : ''}`}>{n}</li>
                ))}
              </ol>
            </div>
          </div>
          <div className="flex flex-1 border-t-2 border-[#262e34] bg-[#20292f]">
            <div className="mr-2 h-20 w-[133px] shrink-0 rounded-tr-lg bg-[#4a5258] pl-1 font-['Open_Sans',sans-serif] text-[13px] text-[#888f94]">Track 1</div>
            <div className="flex-1 bg-[#31404a] bg-[repeating-linear-gradient(90deg,#18232a_0_1px,transparent_1px_60px),repeating-linear-gradient(90deg,#26333b_0_1px,transparent_1px_15px)]" />
          </div>
        </div>
      </div>
      {children}
    </section>
  );
}

const overviewNotes = [
  [6, 6, false],
  [31, 12, false],
  [62, 12, true],
  [111, 1, false],
  [119, 6, false],
  [144, 6, false],
  [169, 6, true],
] as const;

const notes = [
  { pitch: 'C3', x: 20, w: 19, vel: 12 },
  { pitch: 'C3', x: 97, w: 39, vel: 25 },
  { pitch: 'F3', x: 194, w: 38, vel: 27 },
  { pitch: '', x: 342, w: 6, vel: 0 },
  { pitch: 'C3', x: 368, w: 19, vel: 13 },
  { pitch: 'C3', x: 445, w: 19, vel: 13 },
  { pitch: 'F3', x: 522, w: 19, vel: 14 },
];

const rows = [
  { key: 'F#3', black: true },
  { key: 'F3' },
  { key: 'E3' },
  { key: 'D#3', black: true },
  { key: 'D3' },
  { key: 'C#3', black: true },
  { key: 'C3' },
  { key: 'B2' },
  { key: 'A#2', black: true },
  { key: 'A2' },
];

function PianoKeys() {
  return (
    <div className="w-[85px] shrink-0 overflow-hidden border-r border-[#6f767d] bg-linear-to-r from-[#bfc4cb] to-[#ecf0f8]">
      {rows.map(({ key, black }, i) => (
        <div key={key} className={`relative ${i === 0 ? 'h-5' : 'h-[22px]'} ${key === 'F3' || key === 'C3' ? 'border-b border-[#a3a8b0]' : ''}`}>
          {key === 'C3' && <div className="absolute inset-x-0 -top-[11px] bottom-0 bg-black/15" />}
          {black && <div className="relative z-10 h-full w-[54px] bg-linear-to-r from-[#2a2b2d] to-[#4d4e51]" />}
          {key === 'C3' && <span className="absolute right-0.5 bottom-1 font-['Roboto_Condensed','Roboto',sans-serif] text-base leading-5 text-[#41464c]">C3</span>}
        </div>
      ))}
    </div>
  );
}

function PianoRoll() {
  return (
    <section className="absolute top-[92px] right-0 bottom-0 left-[33px] flex flex-col overflow-hidden border-t border-l border-[#252c31] bg-[#41494e]">
      <div className="flex h-[35px] shrink-0 items-center pl-1.5 text-[#d2d8db]">
        <div className="grid w-[135px] shrink-0 grid-cols-5 items-center justify-items-center">
          <Tri className="text-[#b6bdc1]" />
          <Svg w={20} h={20}><path d="M0 16l9-8q-1-5 4-7l4 0-4 4 2 3 5-2q0 6-6 6l-2 0-8 8q-4 0-4-4z" /></Svg>
          <Magnet />
          <Svg w={20} h={20}><circle cx="10" cy="10" r="8.500" fill="none" stroke="currentColor" strokeWidth="1.800" /><path d="M6 7h8M6 10h8M6 13h8" stroke="currentColor" strokeWidth="1.500" /></Svg>
          <Undo />
        </div>
        <div className="ml-[10px]"><Tools items={pianoTools} /></div>
        <h2 className="ml-[17px] flex items-center gap-2 font-['Noto_Sans',sans-serif] text-base whitespace-nowrap">
          <SpeakerLogo />Piano roll - Maschine 2
          <Tri className="text-[#7c8488]" />
        </h2>
        <button aria-label="Minimize" className="mr-3 ml-auto pb-1.5"><span className="block h-[3px] w-[9px] bg-[#d7dde2]" /></button>
      </div>
      <div className="flex h-[50px] shrink-0 pl-[7px]">
        <div className="w-[85px] shrink-0">
          <Svg w={85} h={50}>
            <path d="M.5 49.500v-5l20-37Q23 .5 30 .5h54.500v49z" fill="#92c69b" stroke="#b8e8bf" />
            <path d="M68 20q5 0 6-5t6-5" fill="none" stroke="#6da078" strokeWidth="2.500" />
            <path d="M79 30v13H66z" fill="#6a9c74" />
          </Svg>
        </div>
        <div className="min-w-0 flex-1">
          <div className="flex h-[26px] bg-[#383f46]">
            <ScrollLeft />
            <div className="relative ml-px h-6 w-[262px] border border-[#68787e] bg-[#516068]">
              {overviewNotes.map(([x, w, top]) => (
                <span key={x} className={`absolute h-1 bg-[#e4fbe9] ${top ? 'top-0' : 'bottom-0.5'}`} style={{ left: x, width: w }} />
              ))}
            </div>
            <div className="ml-auto h-6 w-[10px] border border-r-0 border-[#646c71] bg-[#4d555b]" />
          </div>
          <ol className="relative flex h-6 overflow-hidden border-b border-[#364047] bg-[#1f2b32] pl-px font-['Roboto',sans-serif] text-[11px] leading-[26px] text-[#8e999e]">
            {[1, 2, 3].map((n) => <li key={n} className="w-96 shrink-0">{n}</li>)}
            <Svg w={11} h={12} className="absolute top-0.5 left-0"><path d="M0 0h11l-4 8-7 4z" fill="#f1bc56" /></Svg>
          </ol>
        </div>
      </div>
      <div className="flex min-h-0 flex-1 overflow-hidden pl-[7px]">
        <PianoKeys />
        <div className="relative min-w-0 flex-1 overflow-hidden border-l border-[#1a252c]">
          {rows.map(({ key, black }, i) => (
            <div key={key} className={`relative border-b border-[#28353d] ${i === 0 ? 'h-5' : 'h-[22px]'} ${black ? 'bg-[#2e3d47]' : 'bg-[#34444e]'}`}>
              {notes.map((n) => {
                const pitch = n.pitch || 'C3';
                if (pitch !== key) return null;
                return (
                  <div
                    key={n.x}
                    className="absolute top-0 z-10 h-[21px] overflow-hidden rounded-xs border border-[#7fae88] bg-[#a9dab2] font-['Roboto',sans-serif] text-[11px] leading-[14px] text-[#48704f]"
                    style={{ left: n.x - 1, width: n.w }}
                  >
                    <span className="pl-px">{n.pitch}</span>
                    {n.vel > 0 && <span className="absolute bottom-px left-px h-[3px] bg-[#62936c]" style={{ width: n.vel }} />}
                  </div>
                );
              })}
            </div>
          ))}
          <div className="absolute inset-0 bg-[repeating-linear-gradient(90deg,#0f1a21_0_1px,transparent_1px_384px),repeating-linear-gradient(90deg,#1f2c34_0_1px,transparent_1px_96px),repeating-linear-gradient(90deg,#28353d_0_1px,transparent_1px_24px)]" />
        </div>
      </div>
    </section>
  );
}

export default function App() {
  return (
    <div className="flex h-screen bg-white">
      <div className="flex min-w-0 flex-1 flex-col overflow-hidden bg-[#5a6268]">
        <Toolbar />
        <main className="flex min-h-0 flex-1">
          <div className="w-2.5 shrink-0 bg-[#454d53]" />
          <div className="flex w-[623px] shrink-0 flex-col bg-linear-to-br from-[#5b6369] to-[#697177]">
            <ChannelRack />
          </div>
          <Playlist>
            <PianoRoll />
          </Playlist>
        </main>
      </div>
      <div className="w-1.5 bg-[repeating-linear-gradient(180deg,#ffffff_0_4px,#1878c0_4px_8px)] bg-size-[1px_100%] bg-no-repeat" />
    </div>
  );
}
